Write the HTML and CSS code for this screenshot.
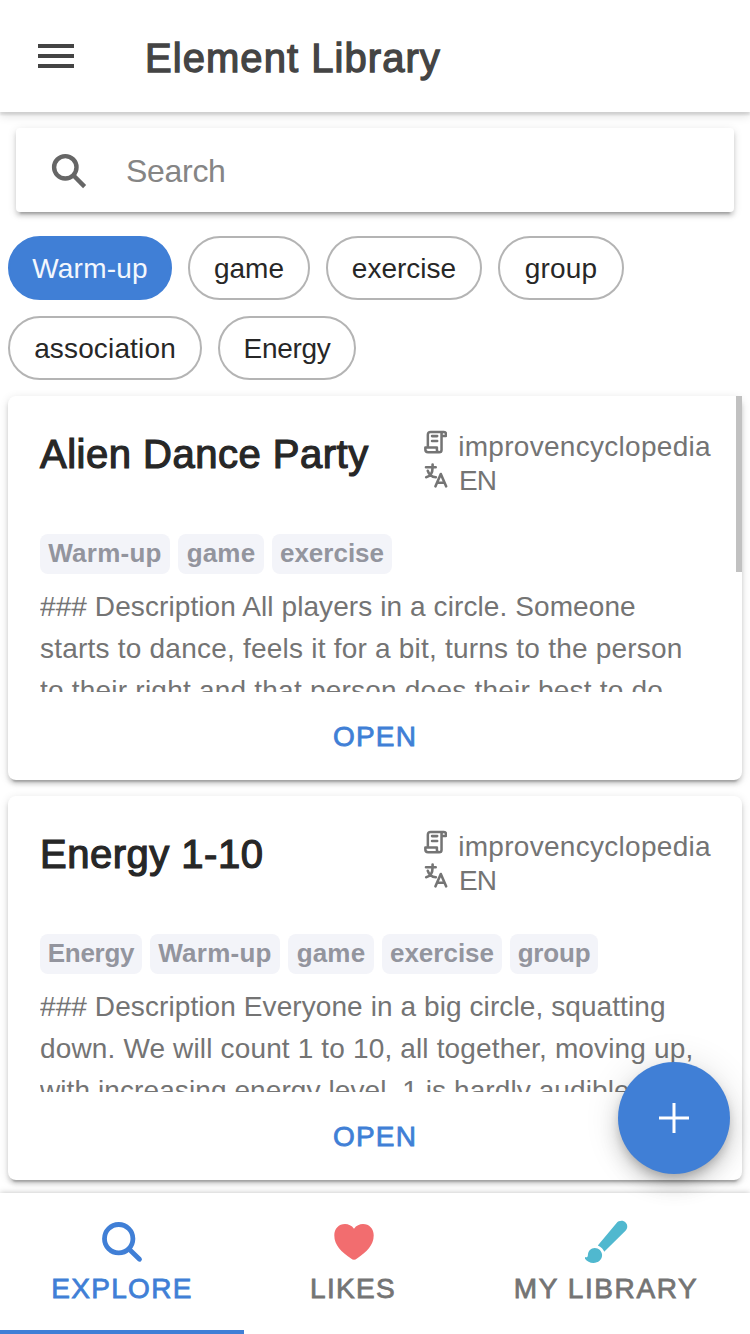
FILE: index.html
```html
<!DOCTYPE html>
<html lang="en">
<head>
<meta charset="utf-8">
<title>Element Library</title>
<link rel="stylesheet" href="styles.css">
</head>
<body>
<svg class="defs" aria-hidden="true">
  <symbol id="scroll" viewBox="0 0 24 24"><path d="M4 17V4.4Q4 1.5 6.9 1.5H20.7Q22.8 1.5 22.8 3.6V5.7H18.2M18.2 5.7V3.4Q18.2 1.5 20.3 1.5M18.2 5.7V20.2Q18.2 22.6 15.8 22.6H4.2Q1.4 22.6 1.4 19.8V17.6H13.4V20.2Q13.4 22.6 15.8 22.6M8.3 5.9H13.7M8.3 11H13.7"/></symbol>
  <symbol id="translate" viewBox="0 0 24 26"><path d="M2 5.3H11.7M8.6 2.6V5.3C8.6 10.5 6.2 14.4 2.2 15.2M3.8 8.8C5 12.8 8 14.9 11.8 15.2M11.5 24.3L16.8 12L22.1 24.3M13.4 20.8H20.2"/></symbol>
</svg>
<div class="app">
  <header class="topbar">
    <svg class="menu" viewBox="0 0 36 24"><path d="M0 2H36M0 12H36M0 22H36"/></svg>
    <h1 class="heading">Element Library</h1>
  </header>
  <main class="content">
    <div class="search">
      <svg class="search-icon" viewBox="0 0 36 36"><circle cx="14.3" cy="14.3" r="11.2"/><path d="M21.8 21.8L33.6 33.6"/></svg>
      <span class="placeholder">Search</span>
    </div>
    <div class="chips">
      <span class="chip chip-on w-warm">Warm-up</span><span class="chip w-game">game</span><span class="chip w-exercise">exercise</span><span class="chip w-group">group</span><span class="chip w-assoc">association</span><span class="chip w-energy">Energy</span>
    </div>
    <section class="list">
      <article class="card">
        <div class="card-head">
          <h2 class="title">Alien Dance Party</h2>
          <div class="meta">
            <div class="meta-row"><svg class="meta-icon"><use href="#scroll"/></svg><span>improvencyclopedia</span></div>
            <div class="meta-row"><svg class="meta-icon meta-lang"><use href="#translate"/></svg><span class="lang">EN</span></div>
          </div>
        </div>
        <div class="tags"><span class="tag t-warm">Warm-up</span><span class="tag t-game">game</span><span class="tag t-exercise">exercise</span></div>
        <p class="text"><span class="line tight">### Description All players in a circle. Someone</span><span class="line loose">starts to dance, feels it for a bit, turns to the person</span><span class="line loose">to their right and that person does their best to do</span></p>
        <div class="open">OPEN</div>
        <div class="scrollbar"></div>
      </article>
      <article class="card">
        <div class="card-head">
          <h2 class="title">Energy 1-10</h2>
          <div class="meta">
            <div class="meta-row"><svg class="meta-icon"><use href="#scroll"/></svg><span>improvencyclopedia</span></div>
            <div class="meta-row"><svg class="meta-icon meta-lang"><use href="#translate"/></svg><span class="lang">EN</span></div>
          </div>
        </div>
        <div class="tags"><span class="tag t-energy">Energy</span><span class="tag t-warm">Warm-up</span><span class="tag t-game">game</span><span class="tag t-exercise">exercise</span><span class="tag t-group">group</span></div>
        <p class="text"><span class="line tight">### Description Everyone in a big circle, squatting</span><span class="line">down. We will count 1 to 10, all together, moving up,</span><span class="line tight">with increasing energy level. 1 is hardly audible</span></p>
        <div class="open">OPEN</div>
      </article>
    </section>
  </main>
  <nav class="tabs">
    <div class="tab tab-on">
      <svg class="tab-icon" viewBox="0 0 44 44"><circle class="lens" cx="18.7" cy="18.7" r="14.2"/><path class="lens" d="M29.2 29.2L39.5 39.3"/></svg>
      <span class="tab-label">EXPLORE</span>
    </div>
    <div class="tab tab-likes">
      <svg class="tab-icon" viewBox="0 0 44 44"><path class="heart" d="M22 8.7C19.7 5.5 16.5 4 13 4C6.8 4 2.3 8.7 2.3 15.3C2.3 25.5 9.5 32 19 38.6Q22 41 25 38.6C34.5 32 41.7 25.5 41.7 15.3C41.7 8.7 37.2 4 31 4C27.5 4 24.3 5.5 22 8.7Z"/></svg>
      <span class="tab-label">LIKES</span>
    </div>
    <div class="tab tab-library">
      <svg class="tab-icon" viewBox="0 0 44 44"><path class="brush" d="M13.8 25.4L32.4 3.2C34.8.1 39.5.2 41.6 2.4C43.8 4.6 43.9 8.2 41.5 10.7L20.2 31.7Q19 27.7 13.8 25.4ZM10.7 27.9C14.8 27.9 18.1 31.1 18.1 35.1C18.1 39.8 14.3 43 9.4 43C6 43 2.8 41.2 1 38.7V37.1C3 37.7 3.8 37 3.9 35C4 31 7 27.9 10.7 27.9Z"/></svg>
      <span class="tab-label">MY LIBRARY</span>
    </div>
  </nav>
  <div class="fab"><svg class="plus" viewBox="0 0 30 30"><path d="M15 0V30M0 15H30"/></svg></div>
</div>
</body>
</html>
```
FILE: styles.css
```css
* { box-sizing: border-box; }
body { margin: 0; background: #fff; font-family: "Liberation Sans", Arial, sans-serif; font-size: 28px; color: #272727; }
.defs { position: absolute; width: 0; height: 0; }
.app { position: relative; width: 750px; height: 1334px; overflow: hidden; display: flex; flex-direction: column; }
h1, h2, p { margin: 0; font-weight: 400; }

.topbar { height: 112px; flex: none; display: flex; align-items: center; padding-left: 38px; gap: 71px; background: #fff; box-shadow: 0 3px 2px rgba(0,0,0,.1), 0 4px 9px rgba(0,0,0,.12); }
.menu { width: 36px; height: 24px; stroke: #444; stroke-width: 4; }
.heading { font-size: 40px; line-height: 48px; padding-top: 4px; letter-spacing: 1.05px; color: #444; -webkit-text-stroke: 1.3px #444; }

.content { flex: 1; min-height: 0; padding-top: 16px; }
.search { height: 84px; margin: 0 16px; display: flex; align-items: center; padding-left: 35px; gap: 39px; border-radius: 4px; background: #fff; box-shadow: 0 6px 2px -4px rgba(0,0,0,.2), 0 4px 4px rgba(0,0,0,.14), 0 2px 10px rgba(0,0,0,.12); }
.search-icon { width: 36px; height: 36px; margin-top: 2px; fill: none; stroke: #666; stroke-width: 4.4; }
.placeholder { font-size: 32px; line-height: 40px; color: #858585; padding-top: 2px; letter-spacing: -.3px; }

.chips { display: flex; flex-wrap: wrap; gap: 16px; padding: 24px 8px 16px; }
.chip { height: 64px; line-height: 62px; border: 2px solid #b4b4b4; border-radius: 32px; text-align: center; white-space: nowrap; }
.chip-on { background: #407fd6; border-color: #407fd6; color: #f3f7fd; }
.w-warm { width: 164px; letter-spacing: .2px; }
.w-game { width: 122px; }
.w-exercise { width: 156px; }
.w-group { width: 126px; letter-spacing: .2px; }
.w-assoc { width: 194px; letter-spacing: .15px; }
.w-energy { width: 138px; letter-spacing: -.3px; }

.list { display: flex; flex-direction: column; gap: 16px; padding: 0 8px; }
.card { position: relative; height: 384px; padding: 32px; border-radius: 8px; background: #fff; box-shadow: 0 6px 2px -4px rgba(0,0,0,.2), 0 4px 4px rgba(0,0,0,.14), 0 2px 10px rgba(0,0,0,.12); }
.card-head { display: flex; justify-content: space-between; height: 106px; }
.title { font-size: 40px; line-height: 52px; letter-spacing: .5px; white-space: nowrap; -webkit-text-stroke: 1.2px #272727; }
.meta { width: 287px; margin-right: -1px; color: #747474; }
.meta-row { display: flex; gap: 11px; height: 34px; line-height: 38px; letter-spacing: .3px; white-space: nowrap; }
.meta-icon { width: 24px; height: 24px; margin-top: 2px; fill: none; stroke: #747474; stroke-width: 2.6; stroke-linejoin: round; stroke-linecap: round; }
.meta-lang { height: 26px; margin-top: 0; }
.lang { letter-spacing: -1px; }
.tags { display: flex; gap: 8px; height: 40px; }
.tag { border-radius: 8px; background: #f3f4f9; color: #93959e; font-size: 26px; font-weight: 700; line-height: 39px; text-align: center; white-space: nowrap; }
.t-warm { width: 130px; letter-spacing: .25px; }
.t-game { width: 86px; letter-spacing: .2px; }
.t-exercise { width: 120px; }
.t-group { width: 88px; letter-spacing: -.2px; }
.t-energy { width: 102px; letter-spacing: -.3px; }
.text { height: 106px; margin-top: 12px; overflow: hidden; color: #747474; line-height: 42px; letter-spacing: .15px; }
.line { display: block; white-space: nowrap; }
.tight { letter-spacing: .09px; }
.loose { letter-spacing: .22px; }
.open { margin-top: 25px; line-height: 40px; text-align: center; letter-spacing: 1.2px; color: #407fd6; -webkit-text-stroke: .8px #407fd6; }
.scrollbar { position: absolute; top: 0; right: 0; width: 6px; height: 176px; background: #c1c1c1; }

.tabs { position: relative; height: 141px; flex: none; display: flex; background: #fff; box-shadow: 0 0 6px rgba(0,0,0,.25); color: #747474; }
.tab { display: flex; flex-direction: column; align-items: center; padding-top: 27px; }
.tab-on { width: 244px; color: #407fd6; border-bottom: 4px solid #407fd6; }
.tab-likes { width: 216px; padding-left: 2px; }
.tab-library { width: 290px; padding-left: 2px; }
.tab-likes .tab-icon { margin-left: 2px; }
.tab-icon { width: 44px; height: 44px; }
.tab-label { line-height: 32px; margin-top: 9px; letter-spacing: 1.3px; white-space: nowrap; -webkit-text-stroke: .8px currentColor; }
.tab-library .tab-label { letter-spacing: 1.6px; }
.lens { fill: none; stroke: #407fd6; stroke-width: 4.8; stroke-linecap: round; }
.heart { fill: #f26d6f; }
.brush { fill: #50b8cf; }

.fab { position: absolute; right: 20px; bottom: 160px; width: 112px; height: 112px; border-radius: 50%; background: #407fd6; display: flex; align-items: center; justify-content: center; box-shadow: 0 6px 10px -2px rgba(0,0,0,.2), 0 12px 20px rgba(0,0,0,.14), 0 2px 36px rgba(0,0,0,.12); }
.plus { width: 30px; height: 30px; stroke: #fff; stroke-width: 3; }
```
